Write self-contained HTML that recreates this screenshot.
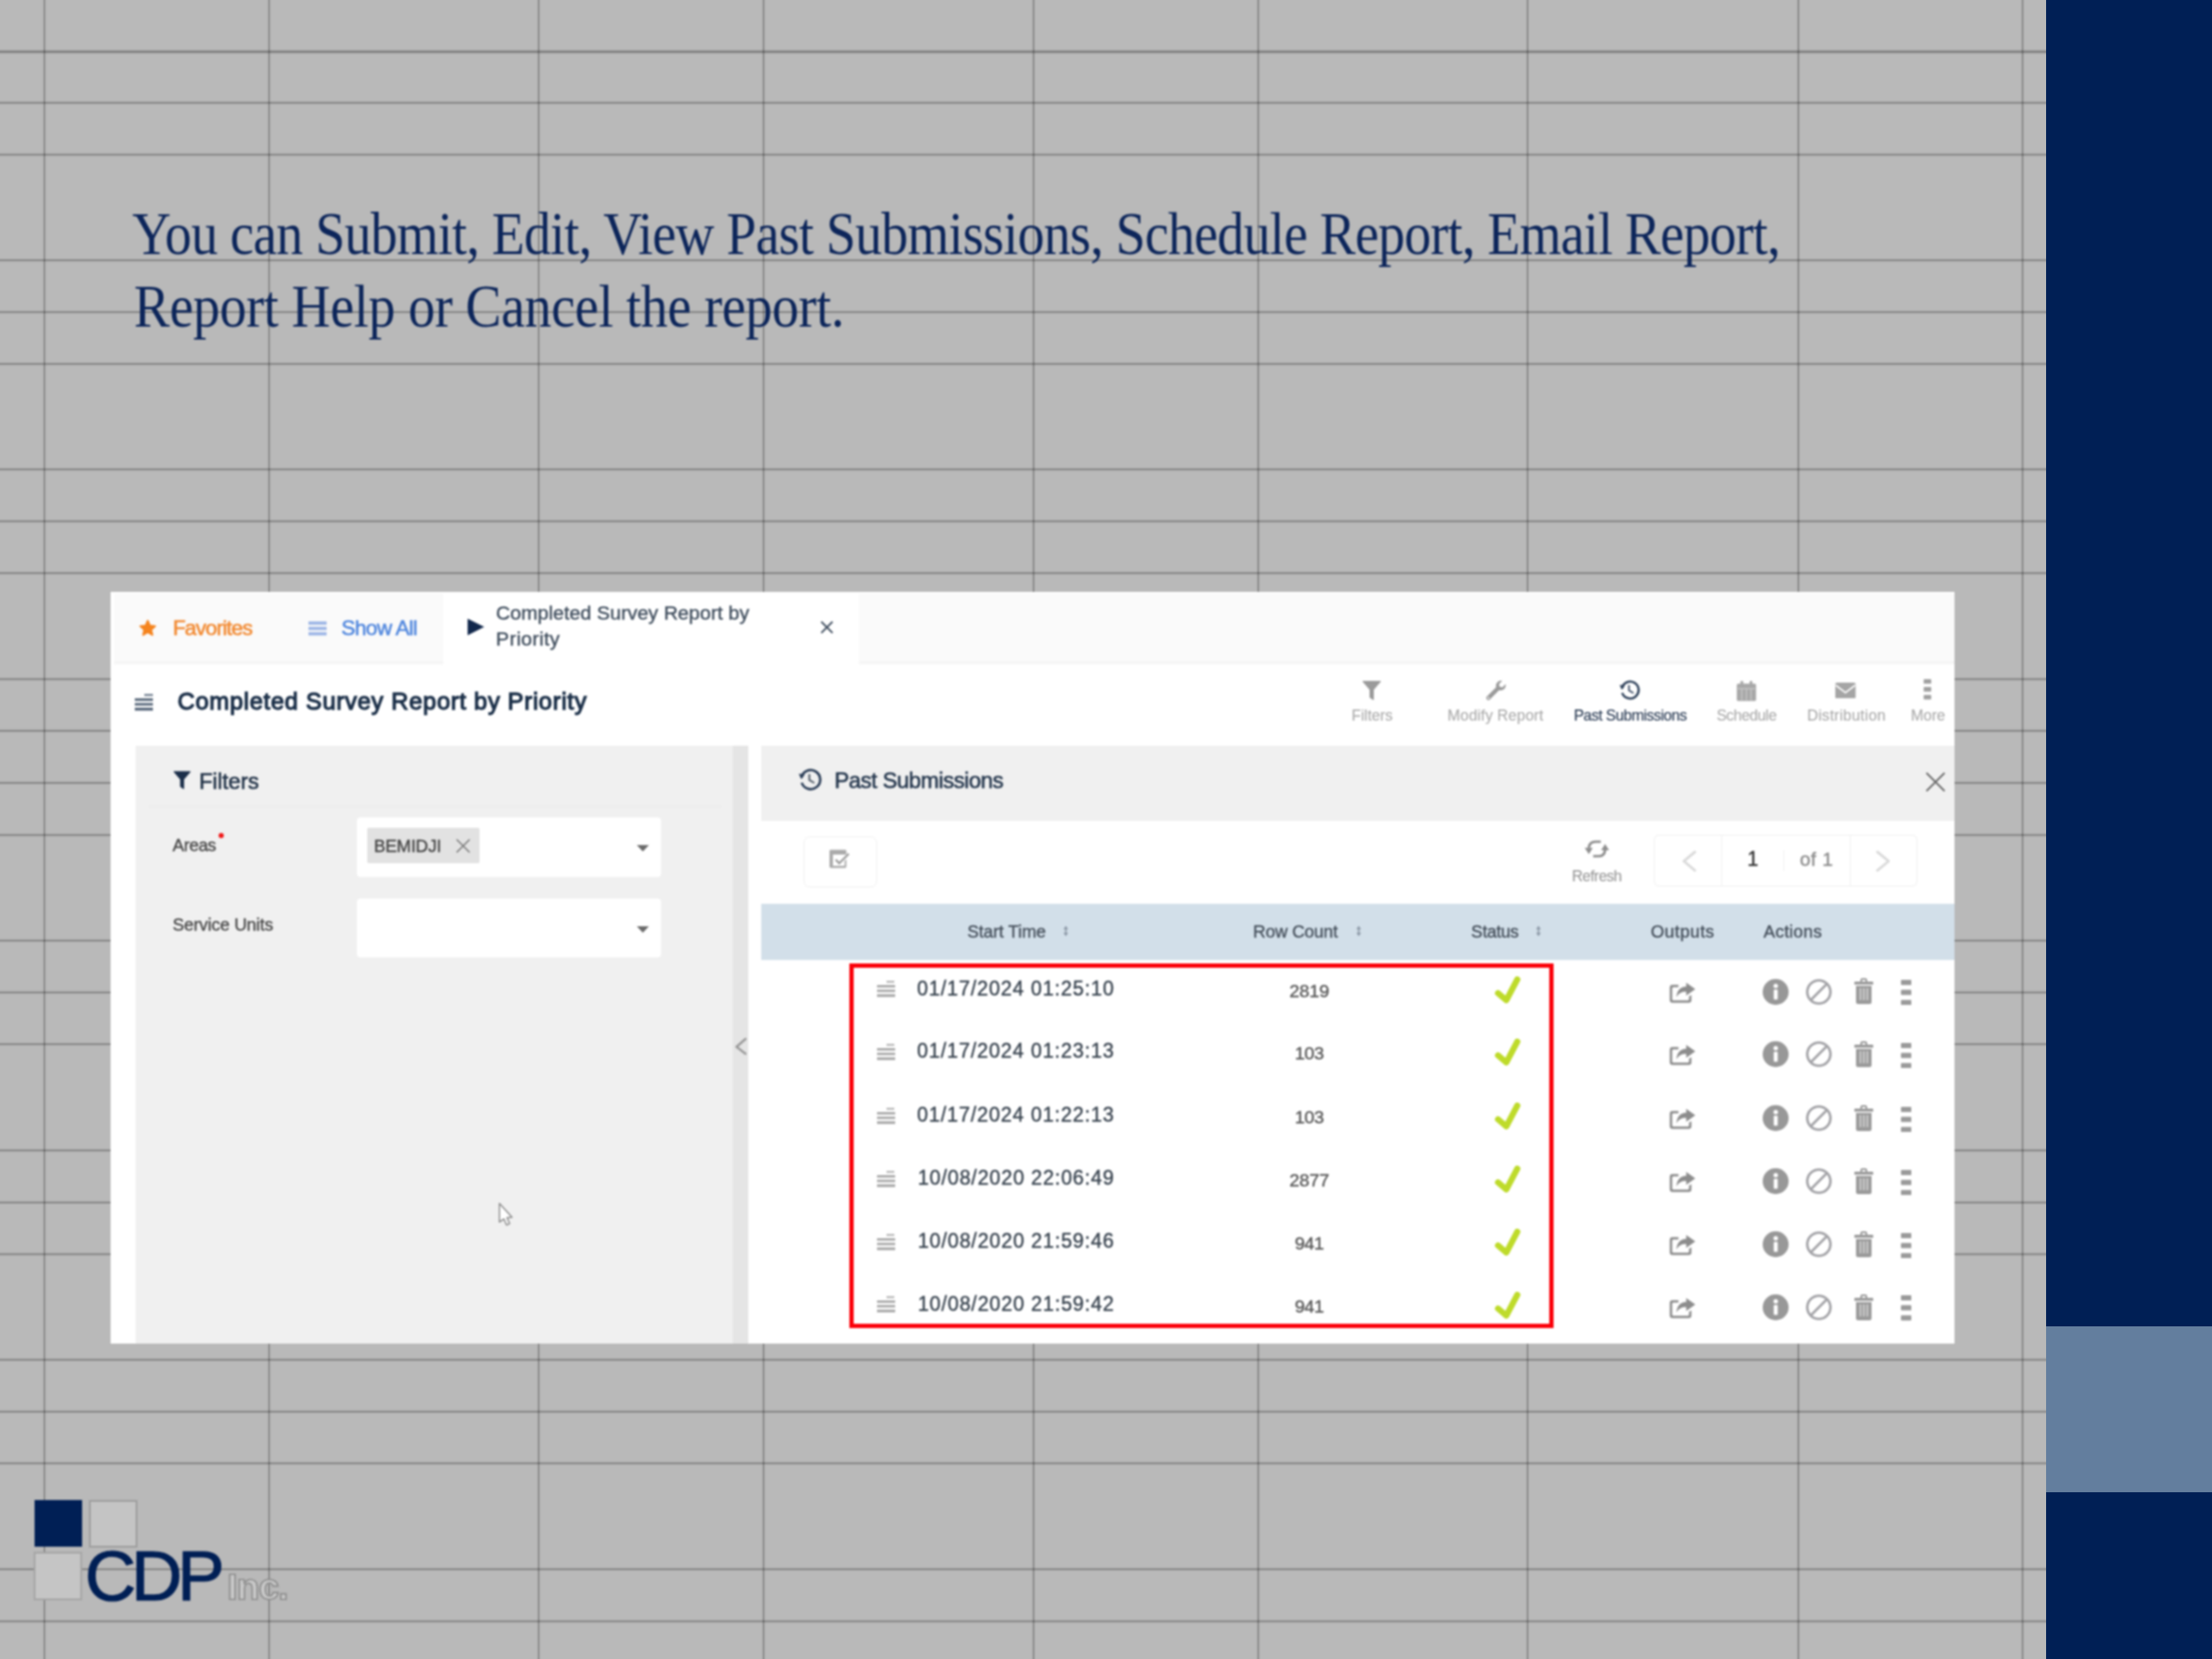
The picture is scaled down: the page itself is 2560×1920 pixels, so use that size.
<!DOCTYPE html>
<html lang="en"><head><meta charset="utf-8"><title>Past Submissions</title>
<style>
html,body{margin:0;padding:0}
body{width:2560px;height:1920px;overflow:hidden;background:#b9b9b9;position:relative}
.t{position:absolute;white-space:pre;display:block}
.r{position:absolute;display:block}
.w{position:absolute;left:0;top:0;width:2560px;height:1920px}
</style></head><body>
<svg class="r" style="left:0.00px;top:0.00px;" width="2560.00" height="1920.00" viewBox="0 0 2560 1920"><g fill="#000" shape-rendering="crispEdges"><rect x="48" y="0" width="1" height="1920" fill-opacity="0.009"/><rect x="49" y="0" width="1" height="1920" fill-opacity="0.049"/><rect x="50" y="0" width="1" height="1920" fill-opacity="0.129"/><rect x="51" y="0" width="1" height="1920" fill-opacity="0.169"/><rect x="52" y="0" width="1" height="1920" fill-opacity="0.112"/><rect x="53" y="0" width="1" height="1920" fill-opacity="0.037"/><rect x="54" y="0" width="1" height="1920" fill-opacity="0.006"/><rect x="308" y="0" width="1" height="1920" fill-opacity="0.009"/><rect x="309" y="0" width="1" height="1920" fill-opacity="0.049"/><rect x="310" y="0" width="1" height="1920" fill-opacity="0.129"/><rect x="311" y="0" width="1" height="1920" fill-opacity="0.169"/><rect x="312" y="0" width="1" height="1920" fill-opacity="0.112"/><rect x="313" y="0" width="1" height="1920" fill-opacity="0.037"/><rect x="314" y="0" width="1" height="1920" fill-opacity="0.006"/><rect x="620" y="0" width="1" height="1920" fill-opacity="0.009"/><rect x="621" y="0" width="1" height="1920" fill-opacity="0.049"/><rect x="622" y="0" width="1" height="1920" fill-opacity="0.129"/><rect x="623" y="0" width="1" height="1920" fill-opacity="0.169"/><rect x="624" y="0" width="1" height="1920" fill-opacity="0.112"/><rect x="625" y="0" width="1" height="1920" fill-opacity="0.037"/><rect x="626" y="0" width="1" height="1920" fill-opacity="0.006"/><rect x="880" y="0" width="1" height="1920" fill-opacity="0.004"/><rect x="881" y="0" width="1" height="1920" fill-opacity="0.032"/><rect x="882" y="0" width="1" height="1920" fill-opacity="0.104"/><rect x="883" y="0" width="1" height="1920" fill-opacity="0.167"/><rect x="884" y="0" width="1" height="1920" fill-opacity="0.136"/><rect x="885" y="0" width="1" height="1920" fill-opacity="0.056"/><rect x="886" y="0" width="1" height="1920" fill-opacity="0.011"/><rect x="1193" y="0" width="1" height="1920" fill-opacity="0.013"/><rect x="1194" y="0" width="1" height="1920" fill-opacity="0.063"/><rect x="1195" y="0" width="1" height="1920" fill-opacity="0.143"/><rect x="1196" y="0" width="1" height="1920" fill-opacity="0.164"/><rect x="1197" y="0" width="1" height="1920" fill-opacity="0.095"/><rect x="1198" y="0" width="1" height="1920" fill-opacity="0.027"/><rect x="1453" y="0" width="1" height="1920" fill-opacity="0.013"/><rect x="1454" y="0" width="1" height="1920" fill-opacity="0.063"/><rect x="1455" y="0" width="1" height="1920" fill-opacity="0.143"/><rect x="1456" y="0" width="1" height="1920" fill-opacity="0.164"/><rect x="1457" y="0" width="1" height="1920" fill-opacity="0.095"/><rect x="1458" y="0" width="1" height="1920" fill-opacity="0.027"/><rect x="1765" y="0" width="1" height="1920" fill-opacity="0.023"/><rect x="1766" y="0" width="1" height="1920" fill-opacity="0.087"/><rect x="1767" y="0" width="1" height="1920" fill-opacity="0.160"/><rect x="1768" y="0" width="1" height="1920" fill-opacity="0.150"/><rect x="1769" y="0" width="1" height="1920" fill-opacity="0.070"/><rect x="1770" y="0" width="1" height="1920" fill-opacity="0.016"/><rect x="2078" y="0" width="1" height="1920" fill-opacity="0.011"/><rect x="2079" y="0" width="1" height="1920" fill-opacity="0.056"/><rect x="2080" y="0" width="1" height="1920" fill-opacity="0.136"/><rect x="2081" y="0" width="1" height="1920" fill-opacity="0.167"/><rect x="2082" y="0" width="1" height="1920" fill-opacity="0.104"/><rect x="2083" y="0" width="1" height="1920" fill-opacity="0.032"/><rect x="2084" y="0" width="1" height="1920" fill-opacity="0.004"/><rect x="2338" y="0" width="1" height="1920" fill-opacity="0.027"/><rect x="2339" y="0" width="1" height="1920" fill-opacity="0.095"/><rect x="2340" y="0" width="1" height="1920" fill-opacity="0.164"/><rect x="2341" y="0" width="1" height="1920" fill-opacity="0.143"/><rect x="2342" y="0" width="1" height="1920" fill-opacity="0.063"/><rect x="2343" y="0" width="1" height="1920" fill-opacity="0.013"/><rect x="0" y="56" width="2368" height="1" fill-opacity="0.015"/><rect x="0" y="57" width="2368" height="1" fill-opacity="0.063"/><rect x="0" y="58" width="2368" height="1" fill-opacity="0.157"/><rect x="0" y="59" width="2368" height="1" fill-opacity="0.239"/><rect x="0" y="60" width="2368" height="1" fill-opacity="0.228"/><rect x="0" y="61" width="2368" height="1" fill-opacity="0.136"/><rect x="0" y="62" width="2368" height="1" fill-opacity="0.049"/><rect x="0" y="63" width="2368" height="1" fill-opacity="0.010"/><rect x="0" y="115" width="2368" height="1" fill-opacity="0.004"/><rect x="0" y="116" width="2368" height="1" fill-opacity="0.028"/><rect x="0" y="117" width="2368" height="1" fill-opacity="0.095"/><rect x="0" y="118" width="2368" height="1" fill-opacity="0.173"/><rect x="0" y="119" width="2368" height="1" fill-opacity="0.173"/><rect x="0" y="120" width="2368" height="1" fill-opacity="0.095"/><rect x="0" y="121" width="2368" height="1" fill-opacity="0.028"/><rect x="0" y="122" width="2368" height="1" fill-opacity="0.004"/><rect x="0" y="175" width="2368" height="1" fill-opacity="0.004"/><rect x="0" y="176" width="2368" height="1" fill-opacity="0.028"/><rect x="0" y="177" width="2368" height="1" fill-opacity="0.095"/><rect x="0" y="178" width="2368" height="1" fill-opacity="0.173"/><rect x="0" y="179" width="2368" height="1" fill-opacity="0.173"/><rect x="0" y="180" width="2368" height="1" fill-opacity="0.095"/><rect x="0" y="181" width="2368" height="1" fill-opacity="0.028"/><rect x="0" y="182" width="2368" height="1" fill-opacity="0.004"/><rect x="0" y="298" width="2368" height="1" fill-opacity="0.020"/><rect x="0" y="299" width="2368" height="1" fill-opacity="0.078"/><rect x="0" y="300" width="2368" height="1" fill-opacity="0.161"/><rect x="0" y="301" width="2368" height="1" fill-opacity="0.181"/><rect x="0" y="302" width="2368" height="1" fill-opacity="0.112"/><rect x="0" y="303" width="2368" height="1" fill-opacity="0.037"/><rect x="0" y="304" width="2368" height="1" fill-opacity="0.006"/><rect x="0" y="358" width="2368" height="1" fill-opacity="0.020"/><rect x="0" y="359" width="2368" height="1" fill-opacity="0.078"/><rect x="0" y="360" width="2368" height="1" fill-opacity="0.161"/><rect x="0" y="361" width="2368" height="1" fill-opacity="0.181"/><rect x="0" y="362" width="2368" height="1" fill-opacity="0.112"/><rect x="0" y="363" width="2368" height="1" fill-opacity="0.037"/><rect x="0" y="364" width="2368" height="1" fill-opacity="0.006"/><rect x="0" y="418" width="2368" height="1" fill-opacity="0.020"/><rect x="0" y="419" width="2368" height="1" fill-opacity="0.078"/><rect x="0" y="420" width="2368" height="1" fill-opacity="0.161"/><rect x="0" y="421" width="2368" height="1" fill-opacity="0.181"/><rect x="0" y="422" width="2368" height="1" fill-opacity="0.112"/><rect x="0" y="423" width="2368" height="1" fill-opacity="0.037"/><rect x="0" y="424" width="2368" height="1" fill-opacity="0.006"/><rect x="0" y="540" width="2368" height="1" fill-opacity="0.020"/><rect x="0" y="541" width="2368" height="1" fill-opacity="0.078"/><rect x="0" y="542" width="2368" height="1" fill-opacity="0.161"/><rect x="0" y="543" width="2368" height="1" fill-opacity="0.181"/><rect x="0" y="544" width="2368" height="1" fill-opacity="0.112"/><rect x="0" y="545" width="2368" height="1" fill-opacity="0.037"/><rect x="0" y="546" width="2368" height="1" fill-opacity="0.006"/><rect x="0" y="600" width="2368" height="1" fill-opacity="0.017"/><rect x="0" y="601" width="2368" height="1" fill-opacity="0.070"/><rect x="0" y="602" width="2368" height="1" fill-opacity="0.154"/><rect x="0" y="603" width="2368" height="1" fill-opacity="0.184"/><rect x="0" y="604" width="2368" height="1" fill-opacity="0.121"/><rect x="0" y="605" width="2368" height="1" fill-opacity="0.043"/><rect x="0" y="606" width="2368" height="1" fill-opacity="0.008"/><rect x="0" y="660" width="2368" height="1" fill-opacity="0.017"/><rect x="0" y="661" width="2368" height="1" fill-opacity="0.070"/><rect x="0" y="662" width="2368" height="1" fill-opacity="0.154"/><rect x="0" y="663" width="2368" height="1" fill-opacity="0.184"/><rect x="0" y="664" width="2368" height="1" fill-opacity="0.121"/><rect x="0" y="665" width="2368" height="1" fill-opacity="0.043"/><rect x="0" y="666" width="2368" height="1" fill-opacity="0.008"/><rect x="0" y="782" width="2368" height="1" fill-opacity="0.004"/><rect x="0" y="783" width="2368" height="1" fill-opacity="0.028"/><rect x="0" y="784" width="2368" height="1" fill-opacity="0.095"/><rect x="0" y="785" width="2368" height="1" fill-opacity="0.173"/><rect x="0" y="786" width="2368" height="1" fill-opacity="0.173"/><rect x="0" y="787" width="2368" height="1" fill-opacity="0.095"/><rect x="0" y="788" width="2368" height="1" fill-opacity="0.028"/><rect x="0" y="789" width="2368" height="1" fill-opacity="0.004"/><rect x="0" y="842" width="2368" height="1" fill-opacity="0.006"/><rect x="0" y="843" width="2368" height="1" fill-opacity="0.037"/><rect x="0" y="844" width="2368" height="1" fill-opacity="0.112"/><rect x="0" y="845" width="2368" height="1" fill-opacity="0.181"/><rect x="0" y="846" width="2368" height="1" fill-opacity="0.161"/><rect x="0" y="847" width="2368" height="1" fill-opacity="0.078"/><rect x="0" y="848" width="2368" height="1" fill-opacity="0.020"/><rect x="0" y="903" width="2368" height="1" fill-opacity="0.024"/><rect x="0" y="904" width="2368" height="1" fill-opacity="0.086"/><rect x="0" y="905" width="2368" height="1" fill-opacity="0.167"/><rect x="0" y="906" width="2368" height="1" fill-opacity="0.178"/><rect x="0" y="907" width="2368" height="1" fill-opacity="0.104"/><rect x="0" y="908" width="2368" height="1" fill-opacity="0.032"/><rect x="0" y="909" width="2368" height="1" fill-opacity="0.005"/><rect x="0" y="963" width="2368" height="1" fill-opacity="0.014"/><rect x="0" y="964" width="2368" height="1" fill-opacity="0.063"/><rect x="0" y="965" width="2368" height="1" fill-opacity="0.146"/><rect x="0" y="966" width="2368" height="1" fill-opacity="0.186"/><rect x="0" y="967" width="2368" height="1" fill-opacity="0.130"/><rect x="0" y="968" width="2368" height="1" fill-opacity="0.049"/><rect x="0" y="969" width="2368" height="1" fill-opacity="0.010"/><rect x="0" y="1085" width="2368" height="1" fill-opacity="0.010"/><rect x="0" y="1086" width="2368" height="1" fill-opacity="0.049"/><rect x="0" y="1087" width="2368" height="1" fill-opacity="0.130"/><rect x="0" y="1088" width="2368" height="1" fill-opacity="0.186"/><rect x="0" y="1089" width="2368" height="1" fill-opacity="0.146"/><rect x="0" y="1090" width="2368" height="1" fill-opacity="0.063"/><rect x="0" y="1091" width="2368" height="1" fill-opacity="0.014"/><rect x="0" y="1145" width="2368" height="1" fill-opacity="0.010"/><rect x="0" y="1146" width="2368" height="1" fill-opacity="0.049"/><rect x="0" y="1147" width="2368" height="1" fill-opacity="0.130"/><rect x="0" y="1148" width="2368" height="1" fill-opacity="0.186"/><rect x="0" y="1149" width="2368" height="1" fill-opacity="0.146"/><rect x="0" y="1150" width="2368" height="1" fill-opacity="0.063"/><rect x="0" y="1151" width="2368" height="1" fill-opacity="0.014"/><rect x="0" y="1205" width="2368" height="1" fill-opacity="0.014"/><rect x="0" y="1206" width="2368" height="1" fill-opacity="0.063"/><rect x="0" y="1207" width="2368" height="1" fill-opacity="0.146"/><rect x="0" y="1208" width="2368" height="1" fill-opacity="0.186"/><rect x="0" y="1209" width="2368" height="1" fill-opacity="0.130"/><rect x="0" y="1210" width="2368" height="1" fill-opacity="0.049"/><rect x="0" y="1211" width="2368" height="1" fill-opacity="0.010"/><rect x="0" y="1328" width="2368" height="1" fill-opacity="0.014"/><rect x="0" y="1329" width="2368" height="1" fill-opacity="0.063"/><rect x="0" y="1330" width="2368" height="1" fill-opacity="0.146"/><rect x="0" y="1331" width="2368" height="1" fill-opacity="0.186"/><rect x="0" y="1332" width="2368" height="1" fill-opacity="0.130"/><rect x="0" y="1333" width="2368" height="1" fill-opacity="0.049"/><rect x="0" y="1334" width="2368" height="1" fill-opacity="0.010"/><rect x="0" y="1388" width="2368" height="1" fill-opacity="0.008"/><rect x="0" y="1389" width="2368" height="1" fill-opacity="0.043"/><rect x="0" y="1390" width="2368" height="1" fill-opacity="0.121"/><rect x="0" y="1391" width="2368" height="1" fill-opacity="0.184"/><rect x="0" y="1392" width="2368" height="1" fill-opacity="0.154"/><rect x="0" y="1393" width="2368" height="1" fill-opacity="0.070"/><rect x="0" y="1394" width="2368" height="1" fill-opacity="0.017"/><rect x="0" y="1448" width="2368" height="1" fill-opacity="0.012"/><rect x="0" y="1449" width="2368" height="1" fill-opacity="0.056"/><rect x="0" y="1450" width="2368" height="1" fill-opacity="0.138"/><rect x="0" y="1451" width="2368" height="1" fill-opacity="0.186"/><rect x="0" y="1452" width="2368" height="1" fill-opacity="0.138"/><rect x="0" y="1453" width="2368" height="1" fill-opacity="0.056"/><rect x="0" y="1454" width="2368" height="1" fill-opacity="0.012"/><rect x="0" y="1570" width="2368" height="1" fill-opacity="0.008"/><rect x="0" y="1571" width="2368" height="1" fill-opacity="0.043"/><rect x="0" y="1572" width="2368" height="1" fill-opacity="0.121"/><rect x="0" y="1573" width="2368" height="1" fill-opacity="0.184"/><rect x="0" y="1574" width="2368" height="1" fill-opacity="0.154"/><rect x="0" y="1575" width="2368" height="1" fill-opacity="0.070"/><rect x="0" y="1576" width="2368" height="1" fill-opacity="0.017"/><rect x="0" y="1630" width="2368" height="1" fill-opacity="0.006"/><rect x="0" y="1631" width="2368" height="1" fill-opacity="0.037"/><rect x="0" y="1632" width="2368" height="1" fill-opacity="0.112"/><rect x="0" y="1633" width="2368" height="1" fill-opacity="0.181"/><rect x="0" y="1634" width="2368" height="1" fill-opacity="0.161"/><rect x="0" y="1635" width="2368" height="1" fill-opacity="0.078"/><rect x="0" y="1636" width="2368" height="1" fill-opacity="0.020"/><rect x="0" y="1690" width="2368" height="1" fill-opacity="0.012"/><rect x="0" y="1691" width="2368" height="1" fill-opacity="0.056"/><rect x="0" y="1692" width="2368" height="1" fill-opacity="0.138"/><rect x="0" y="1693" width="2368" height="1" fill-opacity="0.186"/><rect x="0" y="1694" width="2368" height="1" fill-opacity="0.138"/><rect x="0" y="1695" width="2368" height="1" fill-opacity="0.056"/><rect x="0" y="1696" width="2368" height="1" fill-opacity="0.012"/><rect x="0" y="1813" width="2368" height="1" fill-opacity="0.024"/><rect x="0" y="1814" width="2368" height="1" fill-opacity="0.086"/><rect x="0" y="1815" width="2368" height="1" fill-opacity="0.167"/><rect x="0" y="1816" width="2368" height="1" fill-opacity="0.178"/><rect x="0" y="1817" width="2368" height="1" fill-opacity="0.104"/><rect x="0" y="1818" width="2368" height="1" fill-opacity="0.032"/><rect x="0" y="1819" width="2368" height="1" fill-opacity="0.005"/><rect x="0" y="1873" width="2368" height="1" fill-opacity="0.014"/><rect x="0" y="1874" width="2368" height="1" fill-opacity="0.063"/><rect x="0" y="1875" width="2368" height="1" fill-opacity="0.146"/><rect x="0" y="1876" width="2368" height="1" fill-opacity="0.186"/><rect x="0" y="1877" width="2368" height="1" fill-opacity="0.130"/><rect x="0" y="1878" width="2368" height="1" fill-opacity="0.049"/><rect x="0" y="1879" width="2368" height="1" fill-opacity="0.010"/></g></svg>
<div class="r" style="left:2367.80px;top:0.00px;width:192.20px;height:1920.00px;background:#001f55;"></div>
<div class="r" style="left:2367.80px;top:1535.40px;width:192.20px;height:192.00px;background:#637e9e;"></div>
<div class="w" style="filter:blur(1.0px)">
<span id="t1" class="t" style="left:153.00px;top:236.91px;font:400 69px/1 'Liberation Serif', serif;color:#0c255a;letter-spacing:-0.843px;transform:scaleX(0.9);transform-origin:0 0;">You can Submit, Edit, View Past Submissions, Schedule Report, Email Report,</span>
<span id="t2" class="t" style="left:155.00px;top:320.91px;font:400 69px/1 'Liberation Serif', serif;color:#0c255a;letter-spacing:-0.309px;transform:scaleX(0.9);transform-origin:0 0;">Report Help or Cancel the report.</span>
<div class="r" style="left:40.00px;top:1736.00px;width:54.50px;height:53.80px;background:#001f55;"></div>
<div class="r" style="left:103.00px;top:1736.00px;width:56.00px;height:54.70px;background:#c4c4c4;border:2px solid #9c9c9c;box-sizing:border-box"></div>
<div class="r" style="left:39.20px;top:1796.00px;width:56.10px;height:55.50px;background:#c5c5c5;border:2px solid #a4a4a4;box-sizing:border-box"></div>
<span id="t3" class="t" style="left:98.20px;top:1782.79px;font:400 82px/1 'Liberation Sans', sans-serif;color:#001f55;letter-spacing:-5.714px;-webkit-text-stroke:1.2px #001f55;">CDP</span>
<span id="t4" class="t" style="left:263.00px;top:1815.20px;font:700 43px/1 'Liberation Sans', sans-serif;color:#c8c8c8;letter-spacing:-1.020px;-webkit-text-stroke:1.7px #8c8c8c;">Inc.</span>
</div>
<div class="w" style="filter:blur(1.2px)">
<div class="r" style="left:127.60px;top:685.00px;width:2134.90px;height:869.60px;background:#ffffff;"></div>
<div class="r" style="left:131.70px;top:687.00px;width:2130.80px;height:81.60px;background:#fafafa;"></div>
<div class="r" style="left:131.70px;top:764.50px;width:2130.80px;height:4.10px;background:#f6f6f6;"></div>
<div class="r" style="left:513.00px;top:685.00px;width:480.50px;height:83.60px;background:#ffffff;"></div>
<svg class="r" style="left:161.00px;top:716.60px;" width="20.00" height="20.00" viewBox="0 0 24 24"><path d="M12 1.5l3.1 6.9 7.4.8-5.5 5 1.6 7.3L12 17.7 5.4 21.5 7 14.2l-5.5-5 7.4-.8z" fill="#f5841f" stroke="#f5841f" stroke-width="2.2" stroke-linejoin="round"/></svg>
<span id="t5" class="t" style="left:199.90px;top:715.06px;font:400 24.5px/1 'Liberation Sans', sans-serif;color:#f28a32;letter-spacing:-0.985px;-webkit-text-stroke:0.6px #f28a32;">Favorites</span>
<svg class="r" style="left:356.80px;top:718.50px;" width="21.00" height="17.00" viewBox="0 0 21 17"><rect x="0" y="0.2" width="21" height="3.800" fill="#9db6e6"/><rect x="0" y="6.4" width="21" height="3.800" fill="#9db6e6"/><rect x="0" y="12.6" width="21" height="3.800" fill="#9db6e6"/></svg>
<span id="t6" class="t" style="left:394.90px;top:715.06px;font:400 24.5px/1 'Liberation Sans', sans-serif;color:#5288de;letter-spacing:-0.784px;-webkit-text-stroke:0.6px #5288de;">Show All</span>
<svg class="r" style="left:540.80px;top:715.70px;overflow:visible" width="19.60" height="19.20" viewBox="0 0 22 22"><path d="M0 0L22 11 0 22z" fill="#12284c"/></svg>
<span id="t7" class="t" style="left:574.10px;top:698.44px;font:400 22.75px/1 'Liberation Sans', sans-serif;color:#3f4d5d;letter-spacing:0.034px;-webkit-text-stroke:0.4px #3f4d5d;">Completed Survey Report by</span>
<span id="t8" class="t" style="left:574.10px;top:728.24px;font:400 22.75px/1 'Liberation Sans', sans-serif;color:#3f4d5d;letter-spacing:0.400px;-webkit-text-stroke:0.4px #3f4d5d;">Priority</span>
<svg class="r" style="left:949.00px;top:718.00px;" width="16.00" height="16.00" viewBox="0 0 16 16"><path d="M1.5 1.5l13 13M14.5 1.5l-13 13" stroke="#3c4a5c" stroke-width="1.8" fill="none"/></svg>
<svg class="r" style="left:155.50px;top:802.50px;" width="21.00" height="20.00" viewBox="0 0 21 20"><rect x="11" y="0" width="10" height="2.6" fill="#7c8998"/><rect x="0" y="5.2" width="21" height="3" fill="#58687b"/><rect x="0" y="10.6" width="21" height="3" fill="#58687b"/><rect x="0" y="16" width="21" height="3.4" fill="#58687b"/></svg>
<span id="t9" class="t" style="left:205.50px;top:798.02px;font:400 27.5px/1 'Liberation Sans', sans-serif;color:#1c3049;letter-spacing:0.792px;-webkit-text-stroke:1.3px #1c3049;">Completed Survey Report by Priority</span>
<svg class="r" style="left:1577.30px;top:788.00px;" width="21.00" height="23.00" viewBox="0 0 21 23"><path d="M0.5 0h20a.6.6 0 0 1 .45 1L13 10.2V21.5a.7.7 0 0 1-1.1.55L8.3 19.4a.8.8 0 0 1-.3-.6v-8.6L0.05 1A.6.6 0 0 1 .5 0z" fill="#9b9b9b"/></svg>
<span id="t10" class="t" style="left:1564.25px;top:819.79px;font:400 17.5px/1 'Liberation Sans', sans-serif;color:#acacac;letter-spacing:-0.020px;-webkit-text-stroke:0.15px #acacac;">Filters</span>
<svg class="r" style="left:1718.50px;top:787.00px;" width="24.50" height="24.00" viewBox="0 0 24.5 23.500"><path d="M23.4 4.6c.5 1.9 0 4-1.5 5.5-1.6 1.6-3.9 2.1-5.9 1.4L5.3 22.2a2.4 2.4 0 0 1-3.4 0 2.4 2.4 0 0 1 0-3.4L12.6 8.100c-.7-2-.2-4.300 1.400-5.900C15.500.7 17.600.2 19.500.7l-3.600 3.600.6 3.300 3.300.6z" fill="#9b9b9b"/><circle cx="3.700" cy="20.400" r="1" fill="#fff"/></svg>
<span id="t11" class="t" style="left:1675.30px;top:819.79px;font:400 17.5px/1 'Liberation Sans', sans-serif;color:#acacac;letter-spacing:0.159px;-webkit-text-stroke:0.15px #acacac;">Modify Report</span>
<svg class="r" style="left:1874.20px;top:786.40px;" width="24.00" height="24.00" viewBox="0 0 22.800 22.800"><path d="M3.230 15.100A9.300 9.300 0 1 0 2.850 10.400" fill="none" stroke="#2e405a" stroke-width="2.5"/><path d="M0.300 6.300L6.300 6.900 3 11.600z" fill="#2e405a"/><path d="M10.700 7.400V12.400L14.900 14.900" fill="none" stroke="#4a5870" stroke-width="2.00" stroke-linecap="round" stroke-linejoin="round"/></svg>
<span id="t12" class="t" style="left:1821.40px;top:819.79px;font:400 17.5px/1 'Liberation Sans', sans-serif;color:#2b3c55;letter-spacing:-0.531px;-webkit-text-stroke:0.15px #2b3c55;">Past Submissions</span>
<svg class="r" style="left:2010.00px;top:788.40px;overflow:visible" width="22.40" height="23.30" viewBox="0 0 21 22"><rect x="0" y="3" width="21" height="19" rx="1.500" fill="#a8a8a8"/><rect x="4" y="0" width="3" height="6" rx="1" fill="#a8a8a8"/><rect x="14" y="0" width="3" height="6" rx="1" fill="#a8a8a8"/><rect x="5" y="9" width="1" height="12" fill="#d0d0d0"/><rect x="10" y="9" width="1" height="12" fill="#d0d0d0"/><rect x="15" y="9" width="1" height="12" fill="#d0d0d0"/><rect x="1" y="8" width="19" height="1" fill="#d0d0d0"/></svg>
<span id="t13" class="t" style="left:1986.65px;top:819.79px;font:400 17.5px/1 'Liberation Sans', sans-serif;color:#acacac;letter-spacing:-0.461px;-webkit-text-stroke:0.15px #acacac;">Schedule</span>
<svg class="r" style="left:2124.20px;top:789.70px;" width="23.60" height="18.60" viewBox="0 0 24 19"><rect x="0" y="0" width="24" height="19" rx="2" fill="#a5a5a5"/><path d="M0.500 3l11.500 9 11.500-9" fill="none" stroke="#fff" stroke-width="1.800"/></svg>
<span id="t14" class="t" style="left:2091.50px;top:819.79px;font:400 17.5px/1 'Liberation Sans', sans-serif;color:#acacac;letter-spacing:0.288px;-webkit-text-stroke:0.15px #acacac;">Distribution</span>
<svg class="r" style="left:2226.20px;top:786.00px;" width="9.40" height="23.60" viewBox="0 0 9 24.200"><rect x="0" y="0" width="9" height="5.500" rx="1" fill="#a0a0a0"/><rect x="0" y="9.3" width="9" height="5.500" rx="1" fill="#a0a0a0"/><rect x="0" y="18.6" width="9" height="5.500" rx="1" fill="#a0a0a0"/></svg>
<span id="t15" class="t" style="left:2211.40px;top:819.79px;font:400 17.5px/1 'Liberation Sans', sans-serif;color:#acacac;letter-spacing:-0.019px;-webkit-text-stroke:0.15px #acacac;">More</span>
<div class="r" style="left:156.80px;top:863.00px;width:691.50px;height:691.60px;background:#f0f0f0;"></div>
<div class="r" style="left:848.30px;top:863.00px;width:17.30px;height:691.60px;background:#e5e5e5;"></div>
<svg class="r" style="left:201.00px;top:892.00px;" width="19.50" height="22.60" viewBox="0 0 21 23"><path d="M0.5 0h20a.6.6 0 0 1 .45 1L13 10.2V21.5a.7.7 0 0 1-1.1.55L8.3 19.4a.8.8 0 0 1-.3-.6v-8.6L0.05 1A.6.6 0 0 1 .5 0z" fill="#1c2f4a"/></svg>
<span id="t16" class="t" style="left:230.60px;top:892.41px;font:400 25.5px/1 'Liberation Sans', sans-serif;color:#213247;letter-spacing:-0.060px;-webkit-text-stroke:0.6px #213247;">Filters</span>
<div class="r" style="left:172.00px;top:933.00px;width:663.00px;height:1.20px;background:#e9e9e9;"></div>
<span id="t17" class="t" style="left:199.70px;top:967.77px;font:400 20px/1 'Liberation Sans', sans-serif;color:#4a4a4a;letter-spacing:-0.390px;-webkit-text-stroke:0.4px #4a4a4a;">Areas</span>
<div class="r" style="left:253.4px;top:964.2px;width:6px;height:6px;border-radius:50%;background:#f01818"></div>
<div class="r" style="left:412.80px;top:945.50px;width:352.60px;height:69.50px;background:#ffffff;border-radius:4px"></div>
<div class="r" style="left:424.80px;top:958.20px;width:129.90px;height:41.30px;background:#e2e2e2;border-radius:2px"></div>
<span id="t18" class="t" style="left:432.70px;top:968.77px;font:400 20px/1 'Liberation Sans', sans-serif;color:#464646;letter-spacing:-0.129px;-webkit-text-stroke:0.4px #464646;">BEMIDJI</span>
<svg class="r" style="left:527.00px;top:970.00px;" width="18.00" height="18.00" viewBox="0 0 18 18"><path d="M1.500 1.500l15 15M16.500 1.500l-15 15" stroke="#777" stroke-width="1.600" fill="none"/></svg>
<svg class="r" style="left:737.40px;top:977.60px;" width="14.00" height="7.50" viewBox="0 0 14 7.500"><path d="M0 0h14L7 7.500z" fill="#6a6a6a"/></svg>
<span id="t19" class="t" style="left:199.70px;top:1059.87px;font:400 20px/1 'Liberation Sans', sans-serif;color:#4a4a4a;letter-spacing:-0.101px;-webkit-text-stroke:0.4px #4a4a4a;">Service Units</span>
<div class="r" style="left:412.80px;top:1040.00px;width:352.60px;height:67.70px;background:#ffffff;border-radius:4px"></div>
<svg class="r" style="left:737.40px;top:1072.40px;" width="14.00" height="7.50" viewBox="0 0 14 7.500"><path d="M0 0h14L7 7.500z" fill="#6a6a6a"/></svg>
<svg class="r" style="left:848.00px;top:1198.00px;" width="18.00" height="26.00" viewBox="0 0 18 26"><path d="M14.700 4.500L4.400 13.500 14.700 21.500" fill="none" stroke="#9a9a9a" stroke-width="2.800" stroke-linecap="round" stroke-linejoin="round"/></svg>
<svg class="r" style="left:574.00px;top:1389.00px;" width="24.00" height="32.00" viewBox="0 0 24 32"><path d="M4 3.800V25.300l5.200-3.600 3 7 3.600-1.600-3-6.800 5.800-.5z" fill="#ffffff" stroke="#8a8a8a" stroke-width="1.500" stroke-linejoin="round"/></svg>
<div class="r" style="left:881.40px;top:863.00px;width:1381.10px;height:86.60px;background:#f0f0f0;"></div>
<svg class="r" style="left:924.00px;top:888.30px;" width="27.00" height="27.00" viewBox="0 0 22.800 22.800"><path d="M3.230 15.100A9.300 9.300 0 1 0 2.850 10.400" fill="none" stroke="#2b3d57" stroke-width="2.4"/><path d="M0.300 6.300L6.300 6.900 3 11.600z" fill="#2b3d57"/><path d="M10.700 7.400V12.400L14.900 14.900" fill="none" stroke="#5a6470" stroke-width="1.92" stroke-linecap="round" stroke-linejoin="round"/></svg>
<span id="t20" class="t" style="left:965.80px;top:891.31px;font:400 25.5px/1 'Liberation Sans', sans-serif;color:#26384e;letter-spacing:-0.467px;-webkit-text-stroke:0.6px #26384e;">Past Submissions</span>
<svg class="r" style="left:2228.00px;top:893.00px;" width="24.00" height="24.00" viewBox="0 0 24 24"><path d="M1.500 1.500l21 21M22.500 1.500l-21 21" stroke="#6a6a6a" stroke-width="2" fill="none"/></svg>
<div class="r" style="left:930.00px;top:967.50px;width:84.60px;height:59.20px;background:#ffffff;border:1.8px solid #f1f1f1;border-radius:7px;box-sizing:border-box"></div>
<svg class="r" style="left:959.80px;top:982.90px;" width="23.40" height="22.00" viewBox="0 0 23.400 22"><path d="M1.500 0.500H18a1.500 1.500 0 0 1 1.500 1.500V6H4V19H17.500V13.500L19.500 11.500V20a1.500 1.500 0 0 1-1.500 1.500H1.500A1.500 1.500 0 0 1 0 20V2A1.500 1.500 0 0 1 1.500 0.500z" fill="#ababab"/><path d="M7.200 11.800L11.300 16L22.300 5" fill="none" stroke="#9c9c9c" stroke-width="2.400"/></svg>
<svg class="r" style="left:1830.00px;top:968.00px;" width="36.00" height="28.00" viewBox="0 0 36 28"><path d="M22.700 6.100H16.500Q9.300 6.100 8.700 13.500" fill="none" stroke="#8e8e8e" stroke-width="2.900"/><path d="M4 13.200h9.400l-4.600 7.400z" fill="#8e8e8e"/><path d="M13.800 22.900H20Q27 22.900 27.600 15.800" fill="none" stroke="#8e8e8e" stroke-width="2.900"/><path d="M23 16h9.200l-4.600-7.200z" fill="#8e8e8e"/></svg>
<span id="t21" class="t" style="left:1819.25px;top:1005.79px;font:400 17.5px/1 'Liberation Sans', sans-serif;color:#9a9a9a;letter-spacing:-0.540px;-webkit-text-stroke:0.15px #9a9a9a;">Refresh</span>
<div class="r" style="left:1914.00px;top:965.80px;width:305.00px;height:60.20px;background:#ffffff;border:1.6px solid #efefef;border-radius:6px;box-sizing:border-box"></div>
<div class="r" style="left:1991.60px;top:966.50px;width:1.50px;height:59.00px;background:#f0f0f0;"></div>
<div class="r" style="left:2140.70px;top:966.50px;width:1.50px;height:59.00px;background:#f0f0f0;"></div>
<div class="r" style="left:2063.60px;top:984.00px;width:1.80px;height:24.00px;background:#f1f1f1;"></div>
<svg class="r" style="left:1946.00px;top:982.00px;" width="18.00" height="30.00" viewBox="0 0 18 30"><path d="M15.500 4L2.800 14.700l12.700 10.600" fill="none" stroke="#dadada" stroke-width="3" stroke-linecap="round" stroke-linejoin="round"/></svg>
<svg class="r" style="left:2168.50px;top:982.00px;" width="18.00" height="30.00" viewBox="0 0 18 30"><path d="M3.800 4L16.800 14.700 3.800 25.300" fill="none" stroke="#dadada" stroke-width="3" stroke-linecap="round" stroke-linejoin="round"/></svg>
<span id="t22" class="t" style="left:2022.30px;top:983.23px;font:400 23px/1 'Liberation Sans', sans-serif;color:#333333;letter-spacing:0.000px;-webkit-text-stroke:0.4px #333;">1</span>
<span id="t23" class="t" style="left:2083.00px;top:983.88px;font:400 22px/1 'Liberation Sans', sans-serif;color:#8c8c8c;letter-spacing:0.524px;-webkit-text-stroke:0.4px #8c8c8c;">of 1</span>
<div class="r" style="left:881.40px;top:1045.80px;width:1381.10px;height:65.20px;background:#d2dfe9;"></div>
<span id="t24" class="t" style="left:1119.40px;top:1067.87px;font:400 20px/1 'Liberation Sans', sans-serif;color:#46505c;letter-spacing:-0.004px;-webkit-text-stroke:0.4px #46505c;">Start Time</span>
<svg class="r" style="left:1230.40px;top:1071.30px;" width="7.00" height="13.00" viewBox="0 0 7 13"><path d="M3.500 0.500L6.300 4.500H0.700z M3.500 12.500L6.300 8.500H0.700z" fill="#8b97a6"/><rect x="2.700" y="4" width="1.600" height="5" fill="#8b97a6"/></svg>
<span id="t25" class="t" style="left:1450.30px;top:1067.87px;font:400 20px/1 'Liberation Sans', sans-serif;color:#46505c;letter-spacing:-0.115px;-webkit-text-stroke:0.4px #46505c;">Row Count</span>
<svg class="r" style="left:1568.50px;top:1071.30px;" width="7.00" height="13.00" viewBox="0 0 7 13"><path d="M3.500 0.500L6.300 4.500H0.700z M3.500 12.500L6.300 8.500H0.700z" fill="#8b97a6"/><rect x="2.700" y="4" width="1.600" height="5" fill="#8b97a6"/></svg>
<span id="t26" class="t" style="left:1702.60px;top:1067.87px;font:400 20px/1 'Liberation Sans', sans-serif;color:#46505c;letter-spacing:-0.284px;-webkit-text-stroke:0.4px #46505c;">Status</span>
<svg class="r" style="left:1777.10px;top:1071.30px;" width="7.00" height="13.00" viewBox="0 0 7 13"><path d="M3.500 0.500L6.300 4.500H0.700z M3.500 12.500L6.300 8.500H0.700z" fill="#8b97a6"/><rect x="2.700" y="4" width="1.600" height="5" fill="#8b97a6"/></svg>
<span id="t27" class="t" style="left:1910.50px;top:1067.87px;font:400 20px/1 'Liberation Sans', sans-serif;color:#46505c;letter-spacing:0.550px;-webkit-text-stroke:0.4px #46505c;">Outputs</span>
<span id="t28" class="t" style="left:2041.00px;top:1067.87px;font:400 20px/1 'Liberation Sans', sans-serif;color:#46505c;letter-spacing:0.315px;-webkit-text-stroke:0.4px #46505c;">Actions</span>
<svg class="r" style="left:1015.00px;top:1135.00px;" width="21.00" height="19.00" viewBox="0 0 21 19"><rect x="11" y="0" width="9" height="2.400" fill="#b9b9b9"/><rect x="0" y="5" width="21" height="2.800" fill="#a8a8a8"/><rect x="0" y="10.300" width="21" height="2.800" fill="#a8a8a8"/><rect x="0" y="15.600" width="21" height="3.200" fill="#a8a8a8"/></svg>
<span id="t29" class="t" style="left:1061.30px;top:1132.53px;font:400 23px/1 'Liberation Sans', sans-serif;color:#38434f;letter-spacing:0.924px;-webkit-text-stroke:0.4px #38434f;">01/17/2024 01:25:10</span>
<span id="t30" class="t" style="left:1492.20px;top:1135.62px;font:400 21px/1 'Liberation Sans', sans-serif;color:#585858;letter-spacing:-0.180px;-webkit-text-stroke:0.4px #585858;">2819</span>
<svg class="r" style="left:1730.00px;top:1129.50px;" width="31.00" height="32.50" viewBox="0 0 31 32.500"><path d="M3.700 19.400L13.300 27.600L26 3.500" fill="none" stroke="#bedb2a" stroke-width="7" stroke-linecap="round" stroke-linejoin="round"/></svg>
<svg class="r" style="left:1931.50px;top:1136.50px;" width="30.00" height="24.00" viewBox="0 0 30 24"><path d="M4 2.800H10.500V5.600H4.600a1.300 1.300 0 0 0-1.300 1.300V19.500a1.300 1.300 0 0 0 1.300 1.300H21.400a1.300 1.300 0 0 0 1.300-1.300V16.200l2.800-1.700V20.600a3 3 0 0 1-3 3H3.500a3 3 0 0 1-3-3V5.800a3 3 0 0 1 3-3z" fill="#8d8d8d"/><path d="M19.500 0.300L30 7.800 19.500 15.300V10.800C14.500 10.600 11 12.300 8.300 17C8.500 9.500 12.500 5.200 19.500 4.800z" fill="#8d8d8d"/></svg>
<svg class="r" style="left:2040.00px;top:1132.50px;" width="30.00" height="30.00" viewBox="0 0 30 30"><circle cx="15" cy="15" r="15" fill="#989898"/><rect x="12.800" y="12.300" width="4.600" height="11.500" rx="0.800" fill="#fff"/><circle cx="15.100" cy="8" r="2.600" fill="#fff"/></svg>
<svg class="r" style="left:2090.30px;top:1132.50px;" width="30.00" height="30.00" viewBox="0 0 30 30"><circle cx="15" cy="15" r="13.400" fill="none" stroke="#a2a2a6" stroke-width="2.900"/><path d="M24.500 5.500L5.500 24.500" stroke="#a2a2a6" stroke-width="2.900"/></svg>
<svg class="r" style="left:2145.50px;top:1132.30px;" width="22.00" height="30.00" viewBox="0 0 22 30"><path d="M7 2.500a2.500 2.500 0 0 1 2.500-2.500h3a2.500 2.500 0 0 1 2.500 2.500V4.500h-2V3a1 1 0 0 0-1-1h-2a1 1 0 0 0-1 1V4.500H7z" fill="#9a9a9a"/><rect x="0" y="4" width="22" height="3.600" rx="1.200" fill="#9a9a9a"/><path d="M2 9h18V27.500a2.500 2.500 0 0 1-2.500 2.500h-13A2.500 2.500 0 0 1 2 27.500z" fill="#9a9a9a"/><rect x="6" y="11.500" width="2.200" height="14" fill="#c9c9c9"/><rect x="10" y="11.500" width="2.200" height="14" fill="#c9c9c9"/><rect x="14" y="11.500" width="2.200" height="14" fill="#c9c9c9"/></svg>
<svg class="r" style="left:2200.30px;top:1134.00px;" width="12.20" height="29.20" viewBox="0 0 12.200 29.200"><rect x="0" y="0" width="12.200" height="6" rx="1" fill="#9a9a9a"/><rect x="0" y="11.6" width="12.200" height="6" rx="1" fill="#9a9a9a"/><rect x="0" y="23.2" width="12.200" height="6" rx="1" fill="#9a9a9a"/></svg>
<svg class="r" style="left:1015.00px;top:1207.60px;" width="21.00" height="19.00" viewBox="0 0 21 19"><rect x="11" y="0" width="9" height="2.400" fill="#b9b9b9"/><rect x="0" y="5" width="21" height="2.800" fill="#a8a8a8"/><rect x="0" y="10.300" width="21" height="2.800" fill="#a8a8a8"/><rect x="0" y="15.600" width="21" height="3.200" fill="#a8a8a8"/></svg>
<span id="t31" class="t" style="left:1061.30px;top:1205.13px;font:400 23px/1 'Liberation Sans', sans-serif;color:#38434f;letter-spacing:0.924px;-webkit-text-stroke:0.4px #38434f;">01/17/2024 01:23:13</span>
<span id="t32" class="t" style="left:1498.45px;top:1208.22px;font:400 21px/1 'Liberation Sans', sans-serif;color:#585858;letter-spacing:-0.516px;-webkit-text-stroke:0.4px #585858;">103</span>
<svg class="r" style="left:1730.00px;top:1202.10px;" width="31.00" height="32.50" viewBox="0 0 31 32.500"><path d="M3.700 19.400L13.300 27.600L26 3.500" fill="none" stroke="#bedb2a" stroke-width="7" stroke-linecap="round" stroke-linejoin="round"/></svg>
<svg class="r" style="left:1931.50px;top:1209.10px;" width="30.00" height="24.00" viewBox="0 0 30 24"><path d="M4 2.800H10.500V5.600H4.600a1.300 1.300 0 0 0-1.300 1.300V19.500a1.300 1.300 0 0 0 1.300 1.300H21.400a1.300 1.300 0 0 0 1.300-1.300V16.200l2.800-1.700V20.600a3 3 0 0 1-3 3H3.500a3 3 0 0 1-3-3V5.800a3 3 0 0 1 3-3z" fill="#8d8d8d"/><path d="M19.500 0.300L30 7.800 19.500 15.300V10.800C14.500 10.600 11 12.300 8.300 17C8.500 9.500 12.500 5.200 19.500 4.800z" fill="#8d8d8d"/></svg>
<svg class="r" style="left:2040.00px;top:1205.10px;" width="30.00" height="30.00" viewBox="0 0 30 30"><circle cx="15" cy="15" r="15" fill="#989898"/><rect x="12.800" y="12.300" width="4.600" height="11.500" rx="0.800" fill="#fff"/><circle cx="15.100" cy="8" r="2.600" fill="#fff"/></svg>
<svg class="r" style="left:2090.30px;top:1205.10px;" width="30.00" height="30.00" viewBox="0 0 30 30"><circle cx="15" cy="15" r="13.400" fill="none" stroke="#a2a2a6" stroke-width="2.900"/><path d="M24.500 5.500L5.500 24.500" stroke="#a2a2a6" stroke-width="2.900"/></svg>
<svg class="r" style="left:2145.50px;top:1204.90px;" width="22.00" height="30.00" viewBox="0 0 22 30"><path d="M7 2.500a2.500 2.500 0 0 1 2.500-2.500h3a2.500 2.500 0 0 1 2.500 2.500V4.500h-2V3a1 1 0 0 0-1-1h-2a1 1 0 0 0-1 1V4.500H7z" fill="#9a9a9a"/><rect x="0" y="4" width="22" height="3.600" rx="1.200" fill="#9a9a9a"/><path d="M2 9h18V27.500a2.500 2.500 0 0 1-2.500 2.500h-13A2.500 2.500 0 0 1 2 27.500z" fill="#9a9a9a"/><rect x="6" y="11.500" width="2.200" height="14" fill="#c9c9c9"/><rect x="10" y="11.500" width="2.200" height="14" fill="#c9c9c9"/><rect x="14" y="11.500" width="2.200" height="14" fill="#c9c9c9"/></svg>
<svg class="r" style="left:2200.30px;top:1206.60px;" width="12.20" height="29.20" viewBox="0 0 12.200 29.200"><rect x="0" y="0" width="12.200" height="6" rx="1" fill="#9a9a9a"/><rect x="0" y="11.6" width="12.200" height="6" rx="1" fill="#9a9a9a"/><rect x="0" y="23.2" width="12.200" height="6" rx="1" fill="#9a9a9a"/></svg>
<svg class="r" style="left:1015.00px;top:1281.60px;" width="21.00" height="19.00" viewBox="0 0 21 19"><rect x="11" y="0" width="9" height="2.400" fill="#b9b9b9"/><rect x="0" y="5" width="21" height="2.800" fill="#a8a8a8"/><rect x="0" y="10.300" width="21" height="2.800" fill="#a8a8a8"/><rect x="0" y="15.600" width="21" height="3.200" fill="#a8a8a8"/></svg>
<span id="t33" class="t" style="left:1061.30px;top:1279.13px;font:400 23px/1 'Liberation Sans', sans-serif;color:#38434f;letter-spacing:0.924px;-webkit-text-stroke:0.4px #38434f;">01/17/2024 01:22:13</span>
<span id="t34" class="t" style="left:1498.45px;top:1282.22px;font:400 21px/1 'Liberation Sans', sans-serif;color:#585858;letter-spacing:-0.516px;-webkit-text-stroke:0.4px #585858;">103</span>
<svg class="r" style="left:1730.00px;top:1276.10px;" width="31.00" height="32.50" viewBox="0 0 31 32.500"><path d="M3.700 19.400L13.300 27.600L26 3.500" fill="none" stroke="#bedb2a" stroke-width="7" stroke-linecap="round" stroke-linejoin="round"/></svg>
<svg class="r" style="left:1931.50px;top:1283.10px;" width="30.00" height="24.00" viewBox="0 0 30 24"><path d="M4 2.800H10.500V5.600H4.600a1.300 1.300 0 0 0-1.300 1.300V19.500a1.300 1.300 0 0 0 1.300 1.300H21.400a1.300 1.300 0 0 0 1.300-1.300V16.200l2.800-1.700V20.600a3 3 0 0 1-3 3H3.500a3 3 0 0 1-3-3V5.800a3 3 0 0 1 3-3z" fill="#8d8d8d"/><path d="M19.500 0.300L30 7.800 19.500 15.300V10.800C14.500 10.600 11 12.300 8.300 17C8.500 9.500 12.500 5.200 19.500 4.800z" fill="#8d8d8d"/></svg>
<svg class="r" style="left:2040.00px;top:1279.10px;" width="30.00" height="30.00" viewBox="0 0 30 30"><circle cx="15" cy="15" r="15" fill="#989898"/><rect x="12.800" y="12.300" width="4.600" height="11.500" rx="0.800" fill="#fff"/><circle cx="15.100" cy="8" r="2.600" fill="#fff"/></svg>
<svg class="r" style="left:2090.30px;top:1279.10px;" width="30.00" height="30.00" viewBox="0 0 30 30"><circle cx="15" cy="15" r="13.400" fill="none" stroke="#a2a2a6" stroke-width="2.900"/><path d="M24.500 5.500L5.500 24.500" stroke="#a2a2a6" stroke-width="2.900"/></svg>
<svg class="r" style="left:2145.50px;top:1278.90px;" width="22.00" height="30.00" viewBox="0 0 22 30"><path d="M7 2.500a2.500 2.500 0 0 1 2.500-2.500h3a2.500 2.500 0 0 1 2.500 2.500V4.500h-2V3a1 1 0 0 0-1-1h-2a1 1 0 0 0-1 1V4.500H7z" fill="#9a9a9a"/><rect x="0" y="4" width="22" height="3.600" rx="1.200" fill="#9a9a9a"/><path d="M2 9h18V27.500a2.500 2.500 0 0 1-2.500 2.500h-13A2.500 2.500 0 0 1 2 27.500z" fill="#9a9a9a"/><rect x="6" y="11.500" width="2.200" height="14" fill="#c9c9c9"/><rect x="10" y="11.500" width="2.200" height="14" fill="#c9c9c9"/><rect x="14" y="11.500" width="2.200" height="14" fill="#c9c9c9"/></svg>
<svg class="r" style="left:2200.30px;top:1280.60px;" width="12.20" height="29.20" viewBox="0 0 12.200 29.200"><rect x="0" y="0" width="12.200" height="6" rx="1" fill="#9a9a9a"/><rect x="0" y="11.6" width="12.200" height="6" rx="1" fill="#9a9a9a"/><rect x="0" y="23.2" width="12.200" height="6" rx="1" fill="#9a9a9a"/></svg>
<svg class="r" style="left:1015.00px;top:1354.80px;" width="21.00" height="19.00" viewBox="0 0 21 19"><rect x="11" y="0" width="9" height="2.400" fill="#b9b9b9"/><rect x="0" y="5" width="21" height="2.800" fill="#a8a8a8"/><rect x="0" y="10.300" width="21" height="2.800" fill="#a8a8a8"/><rect x="0" y="15.600" width="21" height="3.200" fill="#a8a8a8"/></svg>
<span id="t35" class="t" style="left:1062.20px;top:1352.33px;font:400 23px/1 'Liberation Sans', sans-serif;color:#38434f;letter-spacing:0.876px;-webkit-text-stroke:0.4px #38434f;">10/08/2020 22:06:49</span>
<span id="t36" class="t" style="left:1492.20px;top:1355.42px;font:400 21px/1 'Liberation Sans', sans-serif;color:#585858;letter-spacing:-0.180px;-webkit-text-stroke:0.4px #585858;">2877</span>
<svg class="r" style="left:1730.00px;top:1349.30px;" width="31.00" height="32.50" viewBox="0 0 31 32.500"><path d="M3.700 19.400L13.300 27.600L26 3.500" fill="none" stroke="#bedb2a" stroke-width="7" stroke-linecap="round" stroke-linejoin="round"/></svg>
<svg class="r" style="left:1931.50px;top:1356.30px;" width="30.00" height="24.00" viewBox="0 0 30 24"><path d="M4 2.800H10.500V5.600H4.600a1.300 1.300 0 0 0-1.300 1.300V19.500a1.300 1.300 0 0 0 1.300 1.300H21.400a1.300 1.300 0 0 0 1.300-1.300V16.200l2.800-1.700V20.600a3 3 0 0 1-3 3H3.500a3 3 0 0 1-3-3V5.800a3 3 0 0 1 3-3z" fill="#8d8d8d"/><path d="M19.500 0.300L30 7.800 19.500 15.300V10.800C14.500 10.600 11 12.300 8.300 17C8.500 9.500 12.500 5.200 19.500 4.800z" fill="#8d8d8d"/></svg>
<svg class="r" style="left:2040.00px;top:1352.30px;" width="30.00" height="30.00" viewBox="0 0 30 30"><circle cx="15" cy="15" r="15" fill="#989898"/><rect x="12.800" y="12.300" width="4.600" height="11.500" rx="0.800" fill="#fff"/><circle cx="15.100" cy="8" r="2.600" fill="#fff"/></svg>
<svg class="r" style="left:2090.30px;top:1352.30px;" width="30.00" height="30.00" viewBox="0 0 30 30"><circle cx="15" cy="15" r="13.400" fill="none" stroke="#a2a2a6" stroke-width="2.900"/><path d="M24.500 5.500L5.500 24.500" stroke="#a2a2a6" stroke-width="2.900"/></svg>
<svg class="r" style="left:2145.50px;top:1352.10px;" width="22.00" height="30.00" viewBox="0 0 22 30"><path d="M7 2.500a2.500 2.500 0 0 1 2.500-2.500h3a2.500 2.500 0 0 1 2.500 2.500V4.500h-2V3a1 1 0 0 0-1-1h-2a1 1 0 0 0-1 1V4.500H7z" fill="#9a9a9a"/><rect x="0" y="4" width="22" height="3.600" rx="1.200" fill="#9a9a9a"/><path d="M2 9h18V27.500a2.500 2.500 0 0 1-2.500 2.500h-13A2.500 2.500 0 0 1 2 27.500z" fill="#9a9a9a"/><rect x="6" y="11.500" width="2.200" height="14" fill="#c9c9c9"/><rect x="10" y="11.500" width="2.200" height="14" fill="#c9c9c9"/><rect x="14" y="11.500" width="2.200" height="14" fill="#c9c9c9"/></svg>
<svg class="r" style="left:2200.30px;top:1353.80px;" width="12.20" height="29.20" viewBox="0 0 12.200 29.200"><rect x="0" y="0" width="12.200" height="6" rx="1" fill="#9a9a9a"/><rect x="0" y="11.6" width="12.200" height="6" rx="1" fill="#9a9a9a"/><rect x="0" y="23.2" width="12.200" height="6" rx="1" fill="#9a9a9a"/></svg>
<svg class="r" style="left:1015.00px;top:1427.60px;" width="21.00" height="19.00" viewBox="0 0 21 19"><rect x="11" y="0" width="9" height="2.400" fill="#b9b9b9"/><rect x="0" y="5" width="21" height="2.800" fill="#a8a8a8"/><rect x="0" y="10.300" width="21" height="2.800" fill="#a8a8a8"/><rect x="0" y="15.600" width="21" height="3.200" fill="#a8a8a8"/></svg>
<span id="t37" class="t" style="left:1062.20px;top:1425.13px;font:400 23px/1 'Liberation Sans', sans-serif;color:#38434f;letter-spacing:0.876px;-webkit-text-stroke:0.4px #38434f;">10/08/2020 21:59:46</span>
<span id="t38" class="t" style="left:1498.45px;top:1428.22px;font:400 21px/1 'Liberation Sans', sans-serif;color:#585858;letter-spacing:-0.516px;-webkit-text-stroke:0.4px #585858;">941</span>
<svg class="r" style="left:1730.00px;top:1422.10px;" width="31.00" height="32.50" viewBox="0 0 31 32.500"><path d="M3.700 19.400L13.300 27.600L26 3.500" fill="none" stroke="#bedb2a" stroke-width="7" stroke-linecap="round" stroke-linejoin="round"/></svg>
<svg class="r" style="left:1931.50px;top:1429.10px;" width="30.00" height="24.00" viewBox="0 0 30 24"><path d="M4 2.800H10.500V5.600H4.600a1.300 1.300 0 0 0-1.300 1.300V19.500a1.300 1.300 0 0 0 1.300 1.300H21.400a1.300 1.300 0 0 0 1.300-1.300V16.200l2.800-1.700V20.600a3 3 0 0 1-3 3H3.500a3 3 0 0 1-3-3V5.800a3 3 0 0 1 3-3z" fill="#8d8d8d"/><path d="M19.500 0.300L30 7.800 19.500 15.300V10.800C14.500 10.600 11 12.300 8.300 17C8.500 9.500 12.500 5.200 19.500 4.800z" fill="#8d8d8d"/></svg>
<svg class="r" style="left:2040.00px;top:1425.10px;" width="30.00" height="30.00" viewBox="0 0 30 30"><circle cx="15" cy="15" r="15" fill="#989898"/><rect x="12.800" y="12.300" width="4.600" height="11.500" rx="0.800" fill="#fff"/><circle cx="15.100" cy="8" r="2.600" fill="#fff"/></svg>
<svg class="r" style="left:2090.30px;top:1425.10px;" width="30.00" height="30.00" viewBox="0 0 30 30"><circle cx="15" cy="15" r="13.400" fill="none" stroke="#a2a2a6" stroke-width="2.900"/><path d="M24.500 5.500L5.500 24.500" stroke="#a2a2a6" stroke-width="2.900"/></svg>
<svg class="r" style="left:2145.50px;top:1424.90px;" width="22.00" height="30.00" viewBox="0 0 22 30"><path d="M7 2.500a2.500 2.500 0 0 1 2.500-2.500h3a2.500 2.500 0 0 1 2.500 2.500V4.500h-2V3a1 1 0 0 0-1-1h-2a1 1 0 0 0-1 1V4.500H7z" fill="#9a9a9a"/><rect x="0" y="4" width="22" height="3.600" rx="1.200" fill="#9a9a9a"/><path d="M2 9h18V27.500a2.500 2.500 0 0 1-2.500 2.500h-13A2.500 2.500 0 0 1 2 27.500z" fill="#9a9a9a"/><rect x="6" y="11.500" width="2.200" height="14" fill="#c9c9c9"/><rect x="10" y="11.500" width="2.200" height="14" fill="#c9c9c9"/><rect x="14" y="11.500" width="2.200" height="14" fill="#c9c9c9"/></svg>
<svg class="r" style="left:2200.30px;top:1426.60px;" width="12.20" height="29.20" viewBox="0 0 12.200 29.200"><rect x="0" y="0" width="12.200" height="6" rx="1" fill="#9a9a9a"/><rect x="0" y="11.6" width="12.200" height="6" rx="1" fill="#9a9a9a"/><rect x="0" y="23.2" width="12.200" height="6" rx="1" fill="#9a9a9a"/></svg>
<svg class="r" style="left:1015.00px;top:1500.40px;" width="21.00" height="19.00" viewBox="0 0 21 19"><rect x="11" y="0" width="9" height="2.400" fill="#b9b9b9"/><rect x="0" y="5" width="21" height="2.800" fill="#a8a8a8"/><rect x="0" y="10.300" width="21" height="2.800" fill="#a8a8a8"/><rect x="0" y="15.600" width="21" height="3.200" fill="#a8a8a8"/></svg>
<span id="t39" class="t" style="left:1062.20px;top:1497.93px;font:400 23px/1 'Liberation Sans', sans-serif;color:#38434f;letter-spacing:0.876px;-webkit-text-stroke:0.4px #38434f;">10/08/2020 21:59:42</span>
<span id="t40" class="t" style="left:1498.45px;top:1501.02px;font:400 21px/1 'Liberation Sans', sans-serif;color:#585858;letter-spacing:-0.516px;-webkit-text-stroke:0.4px #585858;">941</span>
<svg class="r" style="left:1730.00px;top:1494.90px;" width="31.00" height="32.50" viewBox="0 0 31 32.500"><path d="M3.700 19.400L13.300 27.600L26 3.500" fill="none" stroke="#bedb2a" stroke-width="7" stroke-linecap="round" stroke-linejoin="round"/></svg>
<svg class="r" style="left:1931.50px;top:1501.90px;" width="30.00" height="24.00" viewBox="0 0 30 24"><path d="M4 2.800H10.500V5.600H4.600a1.300 1.300 0 0 0-1.300 1.300V19.500a1.300 1.300 0 0 0 1.300 1.300H21.400a1.300 1.300 0 0 0 1.300-1.300V16.200l2.800-1.700V20.600a3 3 0 0 1-3 3H3.500a3 3 0 0 1-3-3V5.800a3 3 0 0 1 3-3z" fill="#8d8d8d"/><path d="M19.500 0.300L30 7.800 19.500 15.300V10.800C14.500 10.600 11 12.300 8.300 17C8.500 9.500 12.500 5.200 19.500 4.800z" fill="#8d8d8d"/></svg>
<svg class="r" style="left:2040.00px;top:1497.90px;" width="30.00" height="30.00" viewBox="0 0 30 30"><circle cx="15" cy="15" r="15" fill="#989898"/><rect x="12.800" y="12.300" width="4.600" height="11.500" rx="0.800" fill="#fff"/><circle cx="15.100" cy="8" r="2.600" fill="#fff"/></svg>
<svg class="r" style="left:2090.30px;top:1497.90px;" width="30.00" height="30.00" viewBox="0 0 30 30"><circle cx="15" cy="15" r="13.400" fill="none" stroke="#a2a2a6" stroke-width="2.900"/><path d="M24.500 5.500L5.500 24.500" stroke="#a2a2a6" stroke-width="2.900"/></svg>
<svg class="r" style="left:2145.50px;top:1497.70px;" width="22.00" height="30.00" viewBox="0 0 22 30"><path d="M7 2.500a2.500 2.500 0 0 1 2.500-2.500h3a2.500 2.500 0 0 1 2.500 2.500V4.500h-2V3a1 1 0 0 0-1-1h-2a1 1 0 0 0-1 1V4.500H7z" fill="#9a9a9a"/><rect x="0" y="4" width="22" height="3.600" rx="1.200" fill="#9a9a9a"/><path d="M2 9h18V27.500a2.500 2.500 0 0 1-2.500 2.500h-13A2.500 2.500 0 0 1 2 27.500z" fill="#9a9a9a"/><rect x="6" y="11.500" width="2.200" height="14" fill="#c9c9c9"/><rect x="10" y="11.500" width="2.200" height="14" fill="#c9c9c9"/><rect x="14" y="11.500" width="2.200" height="14" fill="#c9c9c9"/></svg>
<svg class="r" style="left:2200.30px;top:1499.40px;" width="12.20" height="29.20" viewBox="0 0 12.200 29.200"><rect x="0" y="0" width="12.200" height="6" rx="1" fill="#9a9a9a"/><rect x="0" y="11.6" width="12.200" height="6" rx="1" fill="#9a9a9a"/><rect x="0" y="23.2" width="12.200" height="6" rx="1" fill="#9a9a9a"/></svg>
<div class="r" style="left:982.5px;top:1115.3px;width:815.7px;height:421.4px;border:5.5px solid #fb0008;box-sizing:border-box"></div>
</div>
</body></html>
